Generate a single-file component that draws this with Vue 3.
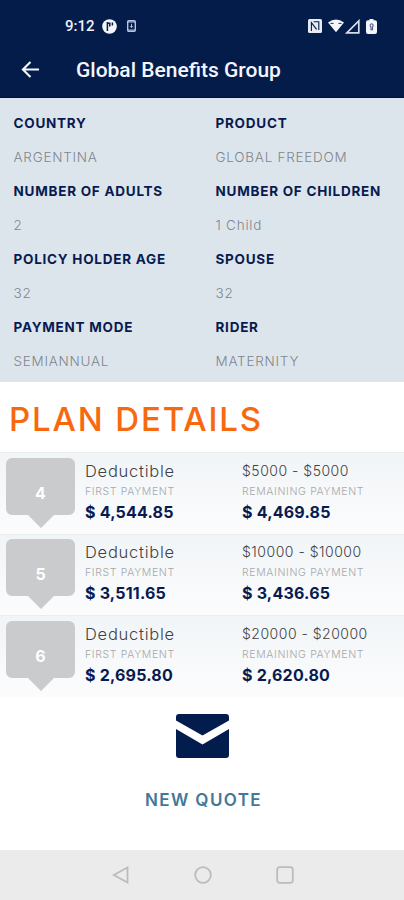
<template>
  <div class="app">
    <header class="header">
      <div class="status-bar">
        <div class="status-left">
          <span class="clock">9:12</span>
          <svg class="status-app" viewBox="0 0 15 15">
            <circle cx="7.5" cy="7.5" r="7.3" fill="#f4f6fb" />
            <path d="M5.4 3v9M5.4 4.2h2.4v3.4M10.4 3.6v3" fill="none" stroke="#031c4a" stroke-width="1.5" />
          </svg>
          <svg class="status-card" viewBox="0 0 9 12">
            <rect x=".7" y=".7" width="7.6" height="10.6" rx="1" fill="none" stroke="#b9c4e2" stroke-width="1.4" />
            <path d="M1 2h7M1 10h7M4.5 3.8v3.8M3 6.2l1.5 1.5L6 6.2" fill="none" stroke="#b9c4e2" />
          </svg>
        </div>
        <div class="status-right">
          <svg class="nfc" viewBox="0 0 14 14">
            <rect width="14" height="14" rx="1.5" fill="#e8ebf3" />
            <path d="M3.4 12V3.6l5.2 6.8M5.6 2.8h5.2V11" fill="none" stroke="#031c4a" stroke-width="1.1" />
          </svg>
          <svg class="wifi" viewBox="0 0 16 14">
            <path d="M0 3.6Q8-2.6 16 3.6L8 13.2z" fill="#f4f6fb" />
            <path d="M2.5 4.4h3M10.5 4.4h3" stroke="#031c4a" stroke-width=".9" />
          </svg>
          <svg class="signal" viewBox="0 0 15 15">
            <path d="M1.8 13.9H13.8V1.9z" fill="none" stroke="#d8ddea" stroke-width="1.7" />
          </svg>
          <svg class="battery" viewBox="0 0 11 15">
            <path d="M3.5 0h4v1.2H9a2 2 0 0 1 2 2V13a2 2 0 0 1-2 2H2a2 2 0 0 1-2-2V3.2a2 2 0 0 1 2-2h1.5z" fill="#f4f6fb" />
            <path d="M5.5 4.7a1.8 1.8 0 0 1 1 3.2v2.8h-1.5V8a1.8 1.8 0 0 1 .5-3.3z" fill="none" stroke="#4d5d83" stroke-width="1.1" />
          </svg>
        </div>
      </div>
      <div class="app-bar">
        <svg class="back" viewBox="0 0 20 20">
          <path d="M19 10H2.5M10 2L2 10l8 8" fill="none" stroke="#f4f6fb" stroke-width="2.2" />
        </svg>
        <h1>Global Benefits Group</h1>
      </div>
    </header>

    <dl class="summary">
      <div v-for="item in summary" :key="item.label" class="summary-item">
        <dt>{{ item.label }}</dt>
        <dd>{{ item.value }}</dd>
      </div>
    </dl>

    <h2>PLAN DETAILS</h2>

    <ul class="plans">
      <li v-for="plan in plans" :key="plan.id" class="plan">
        <div class="badge">
          <svg viewBox="0 0 69 70">
            <path d="M6 0H63a6 6 0 0 1 6 6V51a6 6 0 0 1-6 6H48L35 70 22 57H6a6 6 0 0 1-6-6V6a6 6 0 0 1 6-6z" fill="#c9cbcc" />
          </svg>
          <span>{{ plan.id }}</span>
        </div>
        <div class="plan-col">
          <p class="plan-name">Deductible</p>
          <p class="caption">FIRST PAYMENT</p>
          <p class="amount">$ {{ plan.first }}</p>
        </div>
        <div class="plan-col">
          <p class="plan-range">{{ plan.range }}</p>
          <p class="caption">REMAINING PAYMENT</p>
          <p class="amount">$ {{ plan.remaining }}</p>
        </div>
      </li>
    </ul>

    <div class="actions">
      <svg class="mail" viewBox="0 0 53 44">
        <path d="M3 0H50a3 3 0 0 1 3 3V6.5L26.5 21.5 0 6.5V3a3 3 0 0 1 3-3zM0 15L26.5 30.5 53 15V41a3 3 0 0 1-3 3H3a3 3 0 0 1-3-3z" fill="#031c4e" />
      </svg>
      <button type="button">NEW QUOTE</button>
    </div>

    <nav class="nav-bar">
      <svg viewBox="0 0 18 18"><path d="M15.5 1.5v15L1.8 9z" /></svg>
      <svg viewBox="0 0 18 18"><circle cx="9" cy="9" r="7.8" /></svg>
      <svg viewBox="0 0 18 18"><rect x="1.2" y="1.2" width="15.6" height="15.6" rx="2.5" /></svg>
    </nav>
  </div>
</template>

<script setup>
const summary = [
  { label: 'COUNTRY', value: 'ARGENTINA' },
  { label: 'PRODUCT', value: 'GLOBAL FREEDOM' },
  { label: 'NUMBER OF ADULTS', value: '2' },
  { label: 'NUMBER OF CHILDREN', value: '1 Child' },
  { label: 'POLICY HOLDER AGE', value: '32' },
  { label: 'SPOUSE', value: '32' },
  { label: 'PAYMENT MODE', value: 'SEMIANNUAL' },
  { label: 'RIDER', value: 'MATERNITY' },
]

const plans = [
  { id: 4, range: '$5000 - $5000', first: '4,544.85', remaining: '4,469.85' },
  { id: 5, range: '$10000 - $10000', first: '3,511.65', remaining: '3,436.65' },
  { id: 6, range: '$20000 - $20000', first: '2,695.80', remaining: '2,620.80' },
]
</script>

<style>
body {
  margin: 0;
  background: #fff;
}
</style>

<style scoped>
.app {
  display: flex;
  flex-direction: column;
  height: 900px;
  overflow: hidden;
  background: #fff;
  font-family: Inter, "Liberation Sans", sans-serif;
}

h1,
h2,
p,
dl,
dd,
ul {
  margin: 0;
  padding: 0;
}

svg {
  display: block;
}

.header {
  box-sizing: border-box;
  height: 98px;
  flex: none;
  background: #031c4a;
  border-bottom: 1px solid #02102f;
}

.status-bar {
  display: flex;
  justify-content: space-between;
  align-items: center;
  height: 22px;
  padding: 15px 27px 0 65px;
}

.status-left,
.status-right {
  display: flex;
  align-items: center;
}

.clock {
  width: 37px;
  color: #eef1f8;
  font: 500 15px/22px Roboto, sans-serif;
}

.status-app {
  width: 15px;
  height: 15px;
  margin-right: 10px;
}

.status-card {
  width: 9px;
  height: 12px;
}

.nfc {
  width: 14px;
  height: 14px;
  margin-right: 6px;
}

.wifi {
  width: 16px;
  height: 14px;
  margin-right: 1px;
}

.signal {
  width: 15px;
  height: 15px;
  margin-right: 6px;
}

.battery {
  width: 11px;
  height: 15px;
}

.app-bar {
  display: flex;
  align-items: center;
  gap: 36px;
  height: 32px;
  padding: 17px 0 0 21px;
}

.back {
  width: 19px;
  height: 19px;
  margin-bottom: 2px;
}

h1 {
  color: #f4f6fb;
  font: 500 21px/32px Roboto, sans-serif;
}

.summary {
  display: grid;
  grid-template-columns: 202px 1fr;
  grid-auto-rows: 68.3px;
  box-sizing: border-box;
  height: 284px;
  flex: none;
  padding: 12.5px 0 0 13.5px;
  background: #dde5ec;
}

.summary-item {
  white-space: nowrap;
}

dt {
  color: #071b50;
  font-size: 13.5px;
  font-weight: 700;
  line-height: 24px;
  letter-spacing: .75px;
}

dd {
  margin-top: 10px;
  color: #7f868e;
  font-size: 13.5px;
  font-weight: 300;
  line-height: 24px;
  letter-spacing: .75px;
}

h2 {
  height: 70px;
  flex: none;
  padding-left: 9px;
  color: #f7690f;
  font-size: 33px;
  font-weight: 500;
  line-height: 74px;
  letter-spacing: 1.85px;
  white-space: nowrap;
}

.plans {
  flex: none;
  list-style: none;
}

.plan {
  display: grid;
  grid-template-columns: 79px 157px 1fr;
  box-sizing: border-box;
  height: 81.6px;
  padding: 4.5px 0 0 6px;
  border-top: 1px solid #e9eef1;
  background: linear-gradient(#f1f5f7, #fcfcfd);
}

.badge {
  display: grid;
  width: 69px;
  height: 70px;
}

.badge svg,
.badge span {
  grid-area: 1 / 1;
}

.badge span {
  color: #fff;
  font-size: 16px;
  font-weight: 700;
  line-height: 70px;
  text-align: center;
}

.plan-col {
  white-space: nowrap;
}

.plan-name,
.plan-range {
  color: #3f4144;
  font-size: 16.5px;
  font-weight: 300;
  line-height: 26px;
  letter-spacing: .75px;
}

.plan-range {
  font-size: 14px;
  letter-spacing: .5px;
}

.caption {
  color: #a5a9ac;
  font-size: 10.5px;
  font-weight: 300;
  line-height: 15px;
  letter-spacing: .65px;
}

.amount {
  color: #071b50;
  font-size: 16px;
  font-weight: 700;
  line-height: 27px;
  letter-spacing: .2px;
}

.actions {
  display: flex;
  flex: 1;
  flex-direction: column;
  align-items: center;
  padding-top: 17px;
}

.mail {
  width: 53px;
  height: 44px;
}

button {
  margin-top: 30px;
  padding: 0 0 0 3px;
  border: 0;
  background: none;
  color: #427899;
  font: 600 17px/24px Inter, sans-serif;
  letter-spacing: 1.4px;
}

.nav-bar {
  display: flex;
  align-items: center;
  justify-content: center;
  gap: 64px;
  height: 50px;
  flex: none;
  padding-left: 1px;
  background: #ebebeb;
}

.nav-bar svg {
  width: 18px;
  height: 18px;
  fill: none;
  stroke: #bcbcbc;
  stroke-width: 1.8;
}
</style>
